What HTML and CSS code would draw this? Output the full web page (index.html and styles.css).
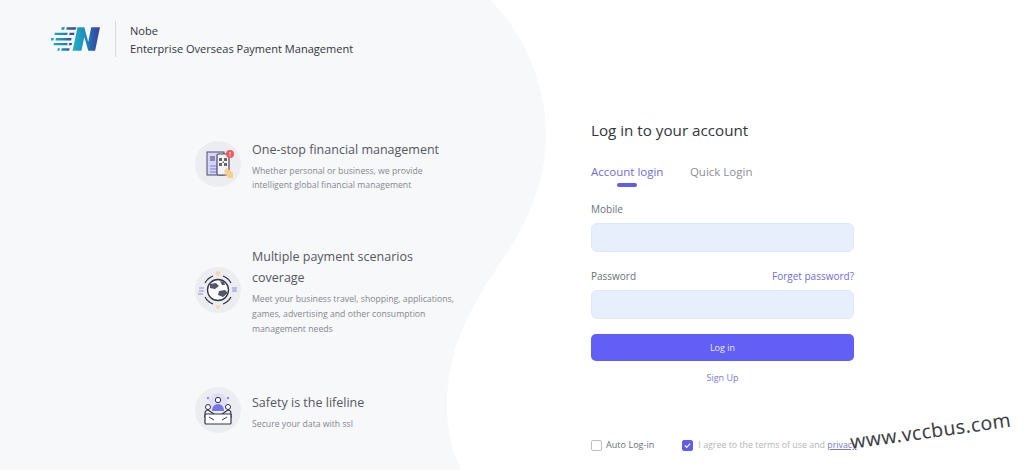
FILE: index.html
```html
<!DOCTYPE html>
<html lang="en">
<head>
<meta charset="utf-8">
<title>Nobe</title>
<link rel="stylesheet" href="styles.css">
</head>
<body>
<div class="page">
  <svg class="wave" viewBox="0 0 1024 470" preserveAspectRatio="none" aria-hidden="true">
    <path d="M0 0H490C520 28 546 80 546 135C546 190 522 232 497 268C470 308 447 350 447 405C447 430 452 452 461 470H0Z" fill="#f7f8fa"/>
  </svg>
  <section class="left">
    <header class="brand">
      <svg class="logo" viewBox="0 0 50 26" aria-hidden="true">
        <defs>
          <linearGradient id="lg" x1="0" x2="1" y1="0" y2="0">
            <stop offset="0" stop-color="#20b5c4"/><stop offset=".5" stop-color="#2186bd"/><stop offset=".75" stop-color="#2c5aa8"/><stop offset="1" stop-color="#43409c"/>
          </linearGradient>
        </defs>
        <path fill="url(#lg)" d="M11 1h3l-.5 2.500h-3zM16 1h10l-1 2.500H15.500zM4 6.500h13l-.5 2.500H3.500zM19 6.500h5l-.5 2.500H18.500zM0 12h3l-.5 2.500H0zM5 12h16l-.5 2.500H4.500zM3 17h14l-.5 2.500H2.500zM18.500 17h3l-.5 2.500h-3zM7 22.500h2l-.5 2.500h-2zM11 22.500h8l-.5 2.500H10.500z"/>
        <path fill="url(#lg)" d="M27 1h7l4 15 3-15h9l-5 24h-7l-4-14-3 14h-9z"/>
      </svg>
      <div class="brand-text">
        <div>Nobe</div>
        <div>Enterprise Overseas Payment Management</div>
      </div>
    </header>
    <div class="features">
      <article class="feature f1">
        <div class="badge">
          <svg viewBox="0 0 46 46" aria-hidden="true">
            <rect x="12" y="11" width="17" height="23" fill="#d6d4f7" stroke="#4a4a68" stroke-width="1"/>
            <path d="M15 25h8M15 28h8M15 31h8" stroke="#7a78e2" stroke-width="1"/>
            <rect x="15" y="15" width="5" height="5" fill="#8a88b0"/>
            <rect x="22" y="13" width="12" height="21" rx="1.500" fill="#f2f3f7" stroke="#4a4a68" stroke-width="1.200"/>
            <path d="M24 17h3v3h-3zM29 17h3v3h-3zM24 22h3v3h-3zM29 22h3v3h-3zM27.500 20.500h1.500v1.500h-1.500z" fill="#666"/>
            <circle cx="35" cy="13" r="4" fill="#ef5a5f"/>
            <path d="M35 11v2.500M35 14.500v.8" stroke="#fff"/>
            <path d="M29 30l3-3 6 5v5h-5z" fill="#f6cf8a"/>
          </svg>
        </div>
        <div class="feature-text">
          <h2>One-stop financial management</h2>
          <p>Whether personal or business, we provide intelligent global financial management</p>
        </div>
      </article>
      <article class="feature f2">
        <div class="badge">
          <svg viewBox="0 0 46 46" fill="none" aria-hidden="true">
            <circle cx="23" cy="23" r="10.500" fill="#fbfbfc" stroke="#33334a" stroke-width="1.300"/>
            <path d="M15 17l6-1 3 3-4 3-5-1zM24 24l6-1 3 3-5 4-5-2zM25 14l4 1 1 3-3 0z" fill="#55556c"/>
            <path d="M10 16A15 15 0 0 1 18 9M28 9a15 15 0 0 1 8 7M36 30a15 15 0 0 1-8 7M18 37a15 15 0 0 1-8-7" stroke="#33334a" stroke-width="1.200"/>
            <circle cx="23" cy="6.500" r="2.500" fill="#f7d9b0"/>
            <circle cx="23" cy="40" r="2" fill="#f7d9b0"/>
            <path d="M4 21h5M4 24h5M3 27h5M37 21h5M37 24h5" stroke="#8d8be8" stroke-width="1"/>
            <circle cx="39.500" cy="23" r="2" fill="#b7b5f0"/>
          </svg>
        </div>
        <div class="feature-text">
          <h2>Multiple payment scenarios coverage</h2>
          <p>Meet your business travel, shopping, applications, games, advertising and other consumption management needs</p>
        </div>
      </article>
      <article class="feature f3">
        <div class="badge">
          <svg viewBox="0 0 46 46" fill="none" aria-hidden="true">
            <circle cx="23" cy="15" r="9" fill="#e0dff8"/>
            <circle cx="13" cy="11" r="1.200" fill="#8d8be8"/>
            <circle cx="33" cy="11" r="1.200" fill="#8d8be8"/>
            <circle cx="23" cy="13" r="2.700" fill="#fff" stroke="#33334a"/>
            <path d="M17 24c0-4 2.500-7 6-7s6 3 6 7z" fill="#7775e6"/>
            <circle cx="13" cy="20" r="2.500" fill="#fff" stroke="#33334a"/>
            <circle cx="33" cy="20" r="2.500" fill="#fff" stroke="#33334a"/>
            <path d="M10 31v-4c0-3 1.500-4 3-4l6 4M36 31v-4c0-3-1.500-4-3-4l-6 4" stroke="#33334a" stroke-width="1.200"/>
            <rect x="10" y="27" width="26" height="10" rx="1" fill="#fff" stroke="#33334a" stroke-width="1.200"/>
            <path d="M14 30l5 3M32 30l-5 3" stroke="#33334a"/>
          </svg>
        </div>
        <div class="feature-text">
          <h2>Safety is the lifeline</h2>
          <p>Secure your data with ssl</p>
        </div>
      </article>
    </div>
  </section>
  <section class="right">
    <h1>Log in to your account</h1>
    <nav class="tabs">
      <span class="tab active">Account login</span>
      <span class="tab">Quick Login</span>
    </nav>
    <form class="form">
      <div class="field-head"><label for="mobile">Mobile</label></div>
      <input class="input" id="mobile" type="text">
      <div class="field-head second"><label for="password">Password</label><a href="#" class="forgot">Forget password?</a></div>
      <input class="input" id="password" type="password">
      <button class="submit" type="button">Log in</button>
      <a href="#" class="signup">Sign Up</a>
    </form>
    <div class="agree">
      <span class="check"><i class="box"></i><span class="auto">Auto Log-in</span></span>
      <span class="check terms"><i class="box on"><svg viewBox="0 0 12 12" aria-hidden="true"><path d="M2.500 6l2.500 2.500 4.500-5" fill="none" stroke="#fff" stroke-width="1.500"/></svg></i><span class="terms-text">I agree to the terms of use and <a href="#">privacy</a></span></span>
    </div>
  </section>
  <div class="watermark">www.vccbus.com</div>
</div>
</body>
</html>
```

FILE: styles.css
```css
* { box-sizing: border-box; }
html, body { margin: 0; height: 100%; }
body { font-family: "Open Sans", "Noto Sans", "Liberation Sans", sans-serif; background: #fff; overflow: hidden; }
.page { position: relative; width: 1024px; height: 470px; display: flex; overflow: hidden; }
.wave { position: absolute; inset: 0; width: 1024px; height: 470px; }
.left { position: relative; width: 591px; flex: none; }
.right { position: relative; width: 263px; flex: none; padding-top: 119px; }

.brand { display: flex; align-items: center; height: 36px; margin: 21px 0 0 51px; }
.logo { width: 49px; height: 26px; flex: none; margin-right: 1px; }
.brand-text { margin-left: 14px; padding-left: 14px; padding-top: 1px; border-left: 1px solid #d9dbe0; height: 36px; font-size: 11.050px; line-height: 18px; color: #33363d; white-space: nowrap; }

.features { margin: 82px 0 0 195px; width: 262px; }
.feature { display: flex; align-items: center; }
.f2 { margin-top: 54px; }
.f3 { margin-top: 53px; }
.badge { width: 46px; height: 46px; border-radius: 50%; background: #ecedf1; flex: none; margin-top: -3px; }
.badge svg { display: block; width: 46px; height: 46px; }
.feature-text { margin-left: 11px; width: 205px; flex: none; }
.feature-text h2 { margin: 0; font-size: 12.500px; line-height: 21px; font-weight: 400; color: #55575f; }
.feature-text p { margin: 4px 0 0; font-size: 8.700px; line-height: 15px; color: #85878f; }
.f1 .feature-text p { line-height: 14px; }

h1 { margin: 0; font-size: 15.200px; line-height: 22px; font-weight: 400; color: #33363d; }
.tabs { display: flex; gap: 26.500px; margin-top: 22px; font-size: 11.500px; line-height: 18px; color: #8e8f9c; position: relative; height: 26px; }
.tab.active { color: #6f6dd6; position: relative; }
.tab.active::after { content: ""; position: absolute; left: 26px; top: 20px; width: 20px; height: 4px; border-radius: 2px; background: #605de8; }

.form { display: flex; flex-direction: column; margin-top: 13px; }
.field-head { display: flex; justify-content: space-between; font-size: 10px; line-height: 15px; color: #6d6f78; }
.field-head.second { margin-top: 17px; }
.forgot { color: #6f6dd6; text-decoration: none; }
.input { display: block; width: 263px; height: 29px; margin-top: 6px; background: #e8effc; border: 1px solid #e0e8f8; border-radius: 6px; outline: none; }
.submit { height: 27px; margin-top: 15px; border: 0; border-radius: 5px; background: #615ff5; color: #eceaff; font-family: inherit; font-size: 9px; }
.signup { margin-top: 10px; align-self: center; font-size: 9px; line-height: 14px; color: #7b79d6; text-decoration: none; }

.agree { display: flex; margin-top: 53px; font-size: 8.850px; line-height: 14px; white-space: nowrap; }
.check { display: flex; align-items: center; }
.terms { margin-left: 28px; }
.box { display: flex; width: 11px; height: 11px; border: 1px solid #bdbdc2; border-radius: 2px; background: #fff; margin-right: 4px; }
.box.on { background: #605de8; border-color: #605de8; margin-right: 5px; }
.box svg { display: block; width: 9px; height: 9px; }
.auto { color: #6d6f78; font-size: 9.100px; }
.terms-text { color: #b2b3ba; }
.terms-text a { color: #7b79d6; }

.watermark { position: absolute; left: 852px; top: 430px; font-family: "Noto Sans", "Open Sans", sans-serif; font-size: 19.500px; line-height: 24px; color: #3c3f46; letter-spacing: .35px; white-space: nowrap; transform: rotate(-8deg); transform-origin: 0 100%; }
```
